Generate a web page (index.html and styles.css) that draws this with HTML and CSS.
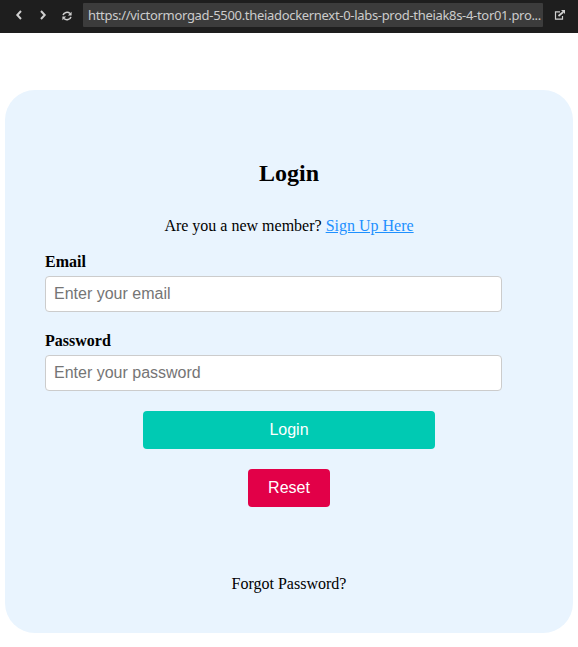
FILE: index.html
```html
<!DOCTYPE html>
<html lang="en">
<head>
<meta charset="utf-8">
<title>Login</title>
<link rel="stylesheet" href="styles.css">
</head>
<body>
<header class="toolbar">
  <button class="nav" aria-label="Back"><svg width="8" height="10" viewBox="0 0 8 10"><path d="M6 1 2.3 5 6 9"/></svg></button>
  <button class="nav" aria-label="Forward"><svg width="8" height="10" viewBox="0 0 8 10"><path d="M2 1 5.7 5 2 9"/></svg></button>
  <button class="nav refresh" aria-label="Reload"><svg width="10" height="10" viewBox="0 0 10 10"><path d="M1.1 4.2A4 3.6 0 0 1 8 2.5M8.9 5.8A4 3.6 0 0 1 2 7.5"/><path class="solid" d="M9.6.7v3.7H5.9zM.4 9.3V5.6h3.7z"/></svg></button>
  <div class="address">https://victormorgad-5500.theiadockernext-0-labs-prod-theiak8s-4-tor01.pro...</div>
  <button class="nav open" aria-label="Open in new window"><svg width="12" height="10" viewBox="0 0 12 10"><path d="M6 1.8H1.5v7.4h7V6"/><path class="arrow" d="M4.5 6 9.2 2"/><path class="solid" d="M7 0h4v4z"/></svg></button>
</header>
<main class="card">
  <h2>Login</h2>
  <p class="signup">Are you a new member? <a href="#">Sign Up Here</a></p>
  <form>
    <label for="email">Email</label>
    <input id="email" type="email" placeholder="Enter your email">
    <label for="password">Password</label>
    <input id="password" type="password" placeholder="Enter your password">
    <button class="btn login" type="button">Login</button>
    <button class="btn reset" type="reset">Reset</button>
  </form>
  <p class="forgot">Forgot Password?</p>
</main>
</body>
</html>
```
FILE: styles.css
```css
* { box-sizing: border-box; }
body { margin: 0; background: #fff; color: #000; font: 16px/18px "Liberation Serif", serif; }
.toolbar { display: flex; align-items: center; height: 33px; padding: 0 13px; background: #1e1e1e; }
.nav { display: flex; align-items: center; justify-content: center; flex: none; width: 12px; height: 24px; margin: 0 12px 0 0; padding: 0; border: 0; background: none; }
.nav svg { display: block; margin-top: -3px; fill: none; stroke: #d0d0d0; stroke-width: 2; }
.nav .solid { fill: #d0d0d0; stroke: none; }
.refresh svg { margin-top: -2px; stroke-width: 1.6; }
.open { margin: 0 0 0 11px; }
.open svg { stroke-width: 1.2; }
.open .arrow { stroke-width: 1.8; }
.address { flex: none; width: 460px; height: 24px; margin: -3px 0 0 -2px; padding: 0 0 0 5px; border-radius: 1px; background: #3c3c3c; color: #ccc; font: 13px/24px "Noto Sans", sans-serif; letter-spacing: -0.31px; white-space: nowrap; }
.card { height: 543px; margin: 57px 5px 0; padding: 69px 40px 0; border-radius: 30px; background: #e9f4fe; }
h2 { margin: 0; font-size: 24px; line-height: 28px; text-align: center; }
.signup { margin: 30px 0 18px; text-align: center; }
.signup a { color: #1e90ff; }
form { display: flex; flex-direction: column; }
label { margin-bottom: 5px; font-weight: bold; }
input { width: 457px; height: 36px; margin: 0 0 20px; padding: 8px; border: 1px solid #ccc; border-radius: 4px; background: #fff; font: 16px "Liberation Sans", sans-serif; }
.btn { align-self: center; height: 38px; padding: 0; border: 0; border-radius: 4px; color: #fff; font: 16px "Liberation Sans", sans-serif; }
.login { width: 292px; margin-bottom: 20px; background: #00cab3; }
.reset { width: 82px; background: #e20048; }
.forgot { margin: 68px 0 0; text-align: center; }
```
